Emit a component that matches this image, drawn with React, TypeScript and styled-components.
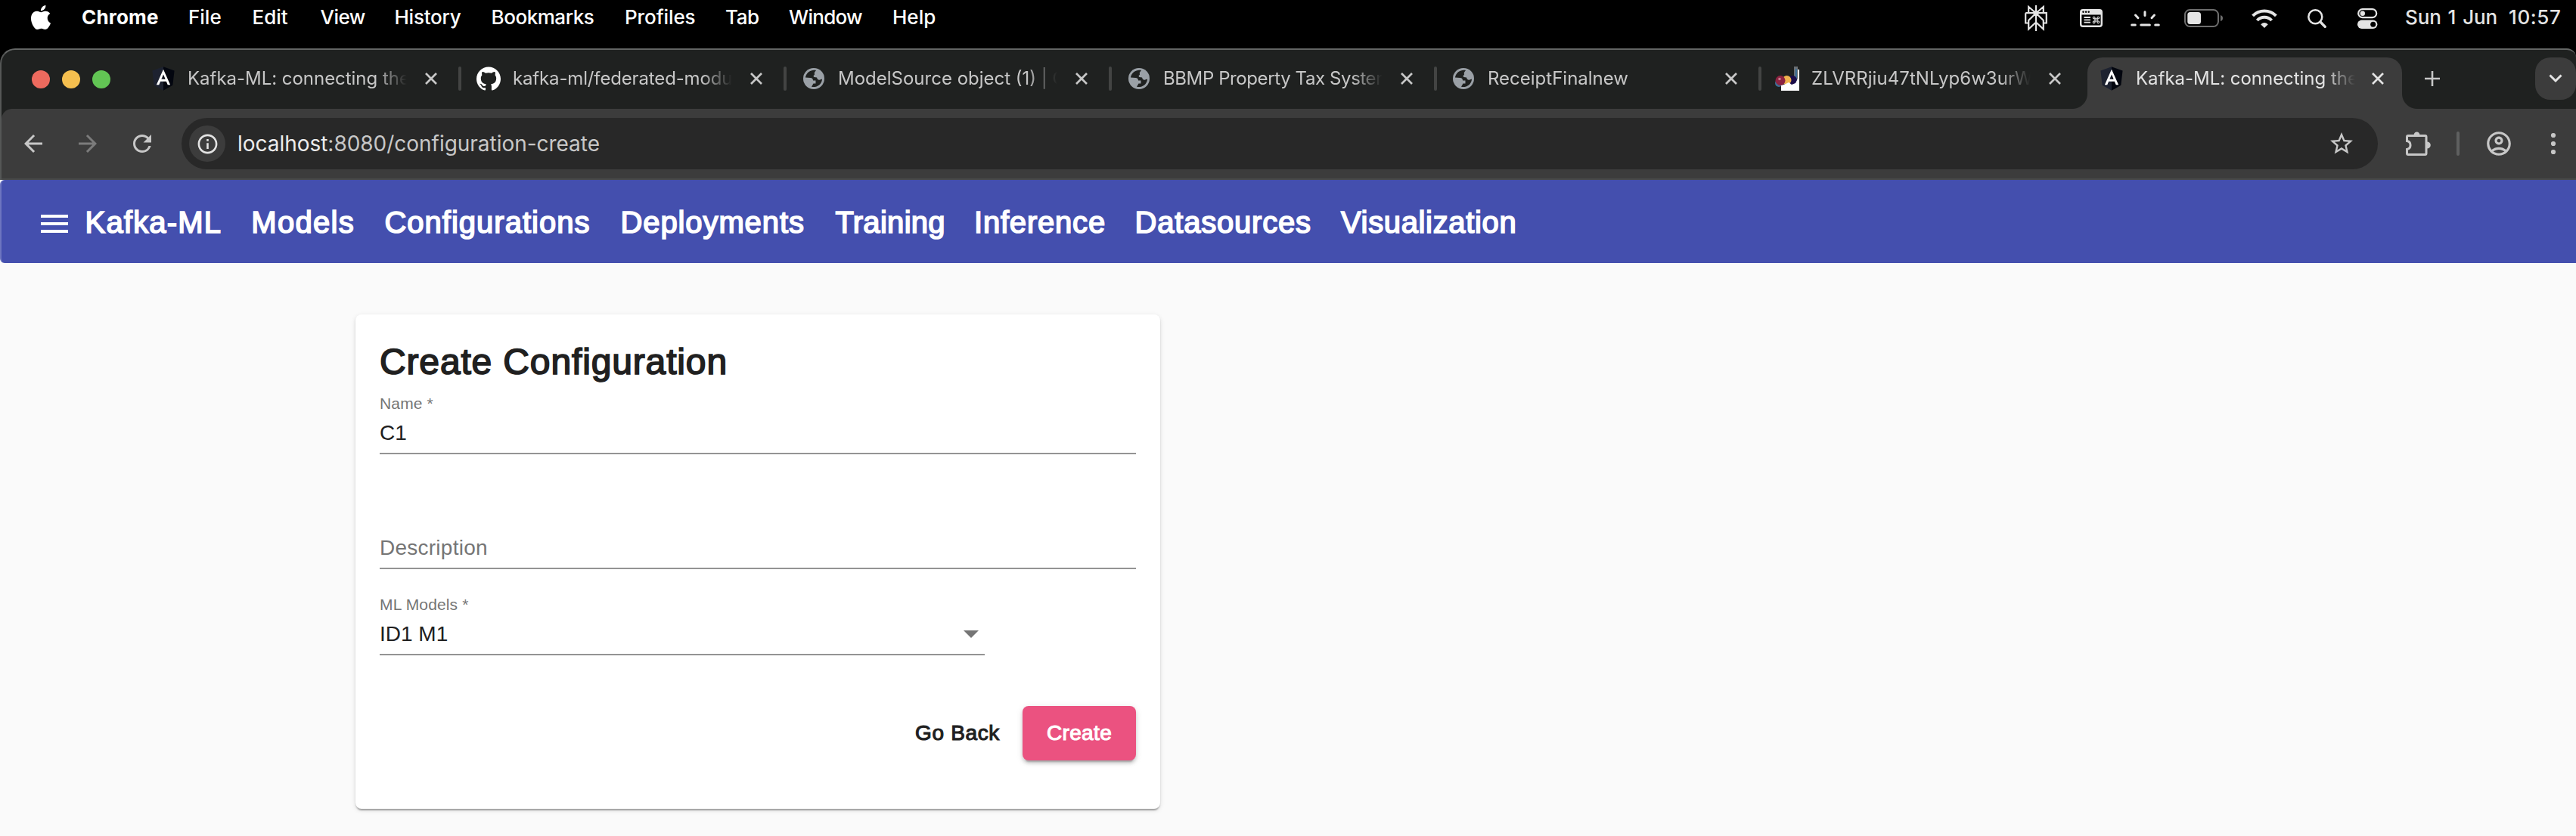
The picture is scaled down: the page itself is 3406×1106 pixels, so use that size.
import React from "react";
import styled, { createGlobalStyle, css } from "styled-components";
import { FaAngular } from "react-icons/fa";
import { SiApple, SiGithub } from "react-icons/si";
import {
  MdArrowBack,
  MdArrowForward,
  MdInfoOutline,
  MdOutlineAccountCircle,
  MdRefresh,
  MdStarBorder,
} from "react-icons/md";

const system = `Inter, "Noto Sans", sans-serif`;
const helvetica = `"Liberation Sans", Arial, sans-serif`;

const GlobalStyle = createGlobalStyle`
  * { box-sizing: border-box; }
  html, body { margin: 0; padding: 0; background: #000; }
  body { width: 3406px; height: 1106px; overflow: hidden; }
  svg { display: block; flex: none; }
  button { border: 0; padding: 0; margin: 0; background: none; font: inherit; color: inherit; }
`;

const Desktop = styled.div`
  display: flex;
  flex-direction: column;
  width: 3406px;
  height: 1106px;
  background: #000;
  font-family: ${system};
`;

/* ---------- macOS menu bar ---------- */

const MenuBar = styled.header`
  display: flex;
  align-items: center;
  height: 64px;
  padding: 0 0 19px 38px;
  color: #fff;
  font-size: 26px;
  font-weight: 500;
  line-height: 32px;
`;

const AppleSlot = styled.div`
  width: 70px;
`;

const MenuItem = styled.span<{ $width: number; $tracking?: number; $strong?: boolean }>`
  flex: none;
  width: ${(p) => p.$width}px;
  letter-spacing: ${(p) => p.$tracking ?? 0}px;
  font-weight: ${(p) => (p.$strong ? 700 : 500)};
  white-space: nowrap;
`;

const Tray = styled.div`
  display: flex;
  align-items: center;
  width: 729px;
  margin-left: auto;
  color: #e4e4e4;
`;

const TrayIcon = styled.div<{ $before?: number }>`
  flex: none;
  margin-left: ${(p) => p.$before ?? 0}px;
  padding-top: 3px;
`;

const Clock = styled.div`
  display: flex;
  margin-left: 36px;
  word-spacing: 2px;
`;

/* ---------- Browser window ---------- */

const BrowserChrome = styled.section`
  height: 174px;
  border-top: 2px solid #636564;
  border-left: 2px solid #555756;
  border-radius: 20px 12px 0 0;
  background: #1f2120;
  overflow: hidden;
`;

const TabStrip = styled.div`
  display: flex;
  height: 78px;
`;

const WindowControls = styled.div`
  display: flex;
  gap: 16px;
  width: 182px;
  padding: 27px 0 0 40px;
`;

const Light = styled.span<{ $color: string }>`
  width: 24px;
  height: 24px;
  border-radius: 50%;
  background: ${(p) => p.$color};
`;

const foot = css`
  content: "";
  position: absolute;
  bottom: 0;
  width: 20px;
  height: 20px;
`;

const TabClose = styled.button`
  margin-left: 24px;
`;

const TabShell = styled.div<{ $width: number; $active?: boolean }>`
  position: relative;
  display: flex;
  align-items: center;
  flex: none;
  width: ${(p) => p.$width}px;
  height: 76px;
  padding-left: 16px;
  color: #c7c7c7;
  ${(p) =>
    p.$active &&
    css`
      height: 68px;
      margin-top: 10px;
      padding-bottom: 12px;
      border-radius: 20px 20px 0 0;
      background: #3c3c3c;
      color: #e3e3e3;
      ${TabClose} {
        margin-left: 22px;
      }
      &::before {
        ${foot}
        left: -20px;
        background: radial-gradient(circle at 0 0, transparent 19.5px, #3c3c3c 20.5px);
      }
      &::after {
        ${foot}
        right: -20px;
        background: radial-gradient(circle at 100% 0, transparent 19.5px, #3c3c3c 20.5px);
      }
    `}
`;

const Favicon = styled.div`
  display: flex;
  align-items: center;
  justify-content: center;
  flex: none;
  width: 32px;
  height: 32px;
`;

const AngularMark = styled(FaAngular)`
  width: 32px;
  height: 36px;
  background: linear-gradient(#fff, #fff) center 46% / 62% 62% no-repeat;
  path {
    fill: url(#shieldShade);
  }
`;

const TabTitle = styled.span<{ $tracking?: number }>`
  width: 290px;
  margin-left: 16px;
  overflow: hidden;
  font-size: 24px;
  line-height: 32px;
  letter-spacing: ${(p) => p.$tracking ?? 0}px;
  white-space: nowrap;
  mask-image: linear-gradient(to right, #000 86%, transparent 100%);
`;

const TabDivider = styled.span`
  width: 4px;
  height: 32px;
  margin-left: 28px;
  border-radius: 2px;
  background: #434443;
`;

const NewTab = styled.button`
  margin: 0 126px 0 30px;
  padding-bottom: 2px;
`;

const TabSearch = styled.button`
  display: flex;
  align-items: center;
  justify-content: center;
  width: 54px;
  height: 56px;
  margin-top: 10px;
  border-radius: 20px;
  background: #3c3c3c;
`;

const Toolbar = styled.div`
  display: flex;
  align-items: center;
  height: 94px;
  padding-left: 24px;
  border-bottom: 2px solid #484949;
  border-top-left-radius: 14px;
  background: #3c3c3c;
  color: #c7c7c7;
`;

const NavButtons = styled.div`
  display: flex;
  gap: 36px;
  margin-right: 34px;
`;

const NavButton = styled.button<{ $dim?: boolean }>`
  color: ${(p) => (p.$dim ? "#7b7b7b" : "#c7c7c7")};
`;

const Omnibox = styled.div`
  display: flex;
  align-items: center;
  width: 2904px;
  height: 68px;
  padding: 0 30px 0 10px;
  border-radius: 34px;
  background: #282828;
`;

const SiteInfo = styled.div`
  display: flex;
  align-items: center;
  justify-content: center;
  width: 48px;
  height: 48px;
  margin-right: 16px;
  border-radius: 50%;
  background: #3c3c3c;
  color: #e3e3e3;
`;

const Address = styled.div`
  flex: 1;
  font-size: 28px;
  line-height: 36px;
  letter-spacing: -0.03px;
  color: #c7c7c7;
`;

const Host = styled.span`
  color: #ececec;
`;

const ToolbarItem = styled.div<{ $before: number }>`
  margin-left: ${(p) => p.$before}px;
`;

const ToolbarDivider = styled.span`
  width: 4px;
  height: 32px;
  margin-left: 33px;
  border-radius: 2px;
  background: #5f6060;
`;

/* ---------- Kafka-ML page ---------- */

const Page = styled.main`
  display: flex;
  flex-direction: column;
  flex: 1;
  background: #fafafa;
  font-family: ${helvetica};
  color: #202020;
`;

const AppBar = styled.nav`
  display: flex;
  align-items: center;
  height: 110px;
  padding: 2px 0 0 52px;
  border-left: 2px solid #6d75c0;
  border-radius: 6px 0 0 6px;
  background: #444fae;
  color: #fff;
`;

const Hamburger = styled.button`
  display: flex;
  flex-direction: column;
  gap: 6px;
  width: 36px;
  margin: 4px 22.5px 0 0;
`;

const HamburgerBar = styled.span`
  height: 4px;
  background: #fff;
`;

const AppLink = styled.a<{ $width: number; $tracking: number }>`
  flex: none;
  width: ${(p) => p.$width}px;
  font-size: 40px;
  line-height: 46px;
  letter-spacing: ${(p) => p.$tracking}px;
  white-space: nowrap;
  -webkit-text-stroke: 1.7px currentColor;
`;

const Card = styled.section`
  display: flex;
  flex-direction: column;
  width: 1064px;
  height: 654px;
  margin: 68px 0 0 470px;
  padding: 32px;
  border-radius: 8px;
  background: #fff;
  box-shadow: 0 4px 2px -2px rgba(0, 0, 0, 0.2), 0 2px 2px rgba(0, 0, 0, 0.14),
    0 2px 6px rgba(0, 0, 0, 0.12);
`;

const CardTitle = styled.h1`
  margin: 0;
  font-size: 48px;
  font-weight: 400;
  line-height: 61px;
  letter-spacing: 0.85px;
  -webkit-text-stroke: 1.7px currentColor;
`;

const Field = styled.div<{ $before: number; $width?: number }>`
  display: flex;
  flex-direction: column;
  width: ${(p) => p.$width ?? 1000}px;
  margin-top: ${(p) => p.$before}px;
  padding-bottom: 10px;
  border-bottom: 2px solid #949494;
`;

const FieldLabel = styled.label`
  margin-bottom: 11px;
  font-size: 21px;
  line-height: 24px;
  letter-spacing: 0.15px;
  color: #757575;
`;

const FieldValue = styled.div<{ $placeholder?: boolean }>`
  display: flex;
  align-items: center;
  justify-content: space-between;
  height: 32px;
  font-size: 28px;
  line-height: 32px;
  letter-spacing: ${(p) => (p.$placeholder ? 0.25 : 0)}px;
  color: ${(p) => (p.$placeholder ? "#757575" : "#202020")};
`;

const SelectArrow = styled.span`
  width: 0;
  height: 0;
  margin-right: 8px;
  border: 10px solid transparent;
  border-top-color: #757575;
  border-bottom: 0;
`;

const Actions = styled.div`
  display: flex;
  align-items: center;
  justify-content: flex-end;
  gap: 30px;
  margin-top: 67px;
`;

const TextButton = styled.button`
  && {
    font-size: 28px;
    line-height: 32px;
    letter-spacing: 0.65px;
    -webkit-text-stroke: 1.1px currentColor;
  }
`;

const PrimaryButton = styled(TextButton)`
  width: 150px;
  height: 72px;
  border-radius: 8px;
  background: #eb5280;
  color: #fff;
  box-shadow: 0 6px 2px -4px rgba(0, 0, 0, 0.2), 0 4px 4px rgba(0, 0, 0, 0.14),
    0 2px 10px rgba(0, 0, 0, 0.12);
  && {
    letter-spacing: 0.35px;
  }
`;

/* ---------- Drawings ---------- */

const ShieldShade = () => (
  <svg width="0" height="0">
    <defs>
      <linearGradient id="shieldShade">
        <stop offset="0.5" stopColor="#1d2230" />
        <stop offset="0.5" stopColor="#03060f" />
      </linearGradient>
    </defs>
  </svg>
);

const PerplexityIcon = () => (
  <svg width="30" height="34" viewBox="0 0 30 34" fill="none" stroke="currentColor" strokeWidth="2.2">
    <path d="M15 0V34M1.2 10.2H28.8V23.5H24.8M1.2 10.2V23.5H5.2M15 10.5L5.2 2V10.2M15 10.5L24.8 2V10.2M15 10.5L5.2 20V31.5L15 22.5L24.8 31.5V20L15 10.5" />
    <circle cx="15" cy="10.5" r="2.4" fill="currentColor" />
  </svg>
);

const ShortcutsIcon = () => (
  <svg width="30" height="24" viewBox="0 0 30 24" fill="none">
    <path fill="currentColor" fillRule="evenodd" d="M4 0H26A4 4 0 0 1 30 4V20A4 4 0 0 1 26 24H4A4 4 0 0 1 0 20V4A4 4 0 0 1 4 0ZM2.4 7.5V20A1.6 1.6 0 0 0 4 21.6H26A1.6 1.6 0 0 0 27.6 20V7.5Z" />
    <circle cx="4.5" cy="3.7" r="1.2" fill="#000" />
    <circle cx="8.1" cy="3.7" r="1.2" fill="#000" />
    <circle cx="11.7" cy="3.7" r="1.2" fill="#000" />
    <path d="M5.5 11H14M5.5 14.3H14M5.5 17.6H14" stroke="currentColor" strokeWidth="1.8" />
    <path d="M20 12.8V16M23 12.8V16M20 12.8H23M20 16H23M20 12.8H19A1.3 1.3 0 1 1 20 11.6ZM23 12.8H24A1.3 1.3 0 1 0 23 11.6ZM20 16H19A1.3 1.3 0 1 0 20 17.2ZM23 16H24A1.3 1.3 0 1 1 23 17.2Z" stroke="currentColor" strokeWidth="1.2" />
  </svg>
);

const BacklightIcon = () => (
  <svg width="39" height="21" viewBox="0 0 39 21" stroke="currentColor" strokeWidth="3" strokeLinecap="round">
    <path d="M19 1.7V6.5M6.5 6L10 9.7M31.5 6L28 9.7M1.7 19H6.3M13.8 19H25.4M32.7 19H37.3" />
  </svg>
);

const BatteryIcon = () => (
  <svg width="51" height="24" viewBox="0 0 51 24">
    <rect x="1" y="1" width="44" height="22" rx="6.5" fill="none" stroke="#6e6e6e" strokeWidth="2" />
    <rect x="4.3" y="4" width="17.7" height="16" rx="3.5" fill="currentColor" />
    <path d="M48 8Q51 9 51 12T48 16Z" fill="#6e6e6e" />
  </svg>
);

const WifiIcon = () => (
  <svg width="34" height="25" viewBox="0 0 34 25" fill="none" stroke="currentColor" strokeWidth="4">
    <path d="M1.6 8.9A21.8 21.8 0 0 1 32.4 8.9M7.4 15A13.2 13.2 0 0 1 26.6 15" />
    <path d="M17 25L12.2 20.2Q17 15.8 21.8 20.2Z" fill="currentColor" stroke="none" />
  </svg>
);

const SearchIcon = () => (
  <svg width="25" height="25" viewBox="0 0 25 25" fill="none" stroke="currentColor" strokeLinecap="round">
    <circle cx="10.3" cy="10.3" r="9" strokeWidth="2.5" />
    <path d="M17 17L23.2 23.4" strokeWidth="3.4" />
  </svg>
);

const ControlCenterIcon = () => (
  <svg width="27" height="27" viewBox="0 0 27 27">
    <rect x="1.2" y="1.2" width="24" height="11" rx="5.5" fill="none" stroke="currentColor" strokeWidth="2.2" />
    <circle cx="6.8" cy="6.7" r="3.2" fill="currentColor" />
    <rect x="0" y="15.6" width="26.4" height="11.4" rx="5.7" fill="currentColor" />
    <circle cx="20.7" cy="21.3" r="3.5" fill="#000" />
  </svg>
);

const GlobeIcon = () => (
  <svg width="28" height="28" viewBox="0 0 28 28">
    <circle cx="14" cy="14" r="14" fill="#9aa0a6" />
    <path d="M17 2.9C11 1.6 4 5.4 2.9 12.5L9.5 13C12 13.2 13 14.5 13 16.5H16.5V20.5H13.5L11 24.8C17 26.2 24.5 22.5 25.1 14.5L21.5 15.8C19.5 16 18.5 14.5 18 12.5L14.5 12C13 11 13.5 9.5 15 9L14.8 6Z" fill="#1f2120" />
  </svg>
);

const BalloonIcon = () => (
  <svg width="32" height="32" viewBox="0 0 32 32">
    <path d="M25 0H30V20H25Z" fill="#6b7075" />
    <path d="M27 3H29V20H26Z" fill="#3d6d94" />
    <circle cx="5" cy="22" r="5" fill="#3f6f96" />
    <circle cx="23" cy="18" r="6" fill="#1c0d4a" />
    <circle cx="15.5" cy="18" r="6" fill="#f0b24f" />
    <path d="M8 25L14 23L18 21L22 24L27 22L30 16V4H32V32H8Z" fill="#fff" />
    <circle cx="7" cy="18.5" r="6.5" fill="#8d2341" />
    <circle cx="6" cy="16.5" r="1.8" fill="#c57b8c" />
  </svg>
);

const CloseIcon = () => (
  <svg width="16" height="16" viewBox="0 0 16 16" stroke="currentColor" strokeWidth="2.7">
    <path d="M1 1L15 15M15 1L1 15" />
  </svg>
);

const PlusIcon = () => (
  <svg width="20" height="20" viewBox="0 0 20 20" stroke="#c7c7c7" strokeWidth="2.6">
    <path d="M10 0V20M0 10H20" />
  </svg>
);

const ChevronIcon = () => (
  <svg width="18" height="12" viewBox="0 0 18 12" fill="none" stroke="#e3e3e3" strokeWidth="3">
    <path d="M1.5 1.5L9 9L16.5 1.5" />
  </svg>
);

const ExtensionsIcon = () => (
  <svg width="34" height="32" viewBox="0 0 34 32">
    <path d="M3 5.5H25.5Q27 5.5 27 7V29Q27 30.5 25.5 30.5H3Q1.5 30.5 1.5 29V23.5A5.6 5.6 0 0 0 1.5 12.5V7Q1.5 5.5 3 5.5Z" fill="none" stroke="currentColor" strokeWidth="3" />
    <path d="M10.5 5A4 4.6 0 0 1 18.5 5ZM28 13.5A4.6 4.3 0 0 1 28 22.5Z" fill="currentColor" />
  </svg>
);

const KebabIcon = () => (
  <svg width="8" height="30" viewBox="0 0 8 30" fill="currentColor">
    <circle cx="4" cy="4" r="3.1" />
    <circle cx="4" cy="15" r="3.1" />
    <circle cx="4" cy="26" r="3.1" />
  </svg>
);

/* ---------- Content ---------- */

const menus = [
  { label: "Chrome", width: 141, tracking: 0.2, strong: true },
  { label: "File", width: 84.5 },
  { label: "Edit", width: 90 },
  { label: "View", width: 98, tracking: -0.5 },
  { label: "History", width: 128, tracking: -0.25 },
  { label: "Bookmarks", width: 176.5, tracking: -0.45 },
  { label: "Profiles", width: 133, tracking: -0.1 },
  { label: "Tab", width: 84, tracking: -0.4 },
  { label: "Window", width: 137, tracking: -0.7 },
  { label: "Help", width: 80 },
];

const tabs = [
  { title: "Kafka-ML: connecting the", width: 430, icon: <AngularMark />, tracking: -0.03 },
  { title: "kafka-ml/federated-modu", width: 430, icon: <SiGithub size={32} color="#fff" />, tracking: -0.15 },
  { title: "ModelSource object (1) | C", width: 430, icon: <GlobeIcon />, tracking: 0 },
  { title: "BBMP Property Tax System", width: 429, icon: <GlobeIcon />, tracking: -0.4 },
  { title: "ReceiptFinalnew", width: 428, icon: <GlobeIcon />, tracking: 0 },
  { title: "ZLVRRjiu47tNLyp6w3urW", width: 429, icon: <BalloonIcon />, tracking: 0.05 },
  { title: "Kafka-ML: connecting the", width: 416, icon: <AngularMark />, tracking: -0.03, active: true },
];

const links = [
  { label: "Kafka-ML", width: 219.8, tracking: 1.2 },
  { label: "Models", width: 176.2, tracking: 1.3 },
  { label: "Configurations", width: 312, tracking: 1 },
  { label: "Deployments", width: 284, tracking: 0.9 },
  { label: "Training", width: 183.5, tracking: 0.3 },
  { label: "Inference", width: 212.5, tracking: 0.8 },
  { label: "Datasources", width: 272.5, tracking: 0.8 },
  { label: "Visualization", width: 240, tracking: 0.65 },
];

export default function App() {
  return (
    <Desktop>
      <GlobalStyle />
      <ShieldShade />
      <MenuBar>
        <AppleSlot>
          <SiApple size={32} />
        </AppleSlot>
        {menus.map((m) => (
          <MenuItem key={m.label} $width={m.width} $tracking={m.tracking} $strong={m.strong}>
            {m.label}
          </MenuItem>
        ))}
        <Tray>
          <TrayIcon><PerplexityIcon /></TrayIcon>
          <TrayIcon $before={43}><ShortcutsIcon /></TrayIcon>
          <TrayIcon $before={37}><BacklightIcon /></TrayIcon>
          <TrayIcon $before={32}><BatteryIcon /></TrayIcon>
          <TrayIcon $before={38}><WifiIcon /></TrayIcon>
          <TrayIcon $before={40}><SearchIcon /></TrayIcon>
          <TrayIcon $before={41}><ControlCenterIcon /></TrayIcon>
          <Clock>
            <MenuItem $width={137} $tracking={-0.1}>Sun 1 Jun</MenuItem>
            <MenuItem $width={80} $tracking={0.6}>10:57</MenuItem>
          </Clock>
        </Tray>
      </MenuBar>

      <BrowserChrome>
        <TabStrip>
          <WindowControls>
            <Light $color="#ed6a5e" />
            <Light $color="#f5bf4f" />
            <Light $color="#62c554" />
          </WindowControls>
          {tabs.map((tab, i) => (
            <TabShell key={i} $width={tab.width} $active={tab.active}>
              <Favicon>{tab.icon}</Favicon>
              <TabTitle $tracking={tab.tracking}>{tab.title}</TabTitle>
              <TabClose><CloseIcon /></TabClose>
              {i < tabs.length - 2 && <TabDivider />}
            </TabShell>
          ))}
          <NewTab><PlusIcon /></NewTab>
          <TabSearch><ChevronIcon /></TabSearch>
        </TabStrip>
        <Toolbar>
          <NavButtons>
            <NavButton><MdArrowBack size={36} /></NavButton>
            <NavButton $dim><MdArrowForward size={36} /></NavButton>
            <NavButton><MdRefresh size={36} /></NavButton>
          </NavButtons>
          <Omnibox>
            <SiteInfo><MdInfoOutline size={31} /></SiteInfo>
            <Address>
              <Host>localhost</Host>:8080/configuration-create
            </Address>
            <MdStarBorder size={36} />
          </Omnibox>
          <ToolbarItem $before={37}><ExtensionsIcon /></ToolbarItem>
          <ToolbarDivider />
          <ToolbarItem $before={33}><MdOutlineAccountCircle size={38} /></ToolbarItem>
          <ToolbarItem $before={49}><KebabIcon /></ToolbarItem>
        </Toolbar>
      </BrowserChrome>

      <Page>
        <AppBar>
          <Hamburger>
            <HamburgerBar />
            <HamburgerBar />
            <HamburgerBar />
          </Hamburger>
          {links.map((l) => (
            <AppLink key={l.label} $width={l.width} $tracking={l.tracking}>
              {l.label}
            </AppLink>
          ))}
        </AppBar>
        <Card>
          <CardTitle>Create Configuration</CardTitle>
          <Field $before={13}>
            <FieldLabel>Name *</FieldLabel>
            <FieldValue>C1</FieldValue>
          </Field>
          <Field $before={108}>
            <FieldValue $placeholder>Description</FieldValue>
          </Field>
          <Field $before={35} $width={800}>
            <FieldLabel>ML Models *</FieldLabel>
            <FieldValue>
              ID1 M1
              <SelectArrow />
            </FieldValue>
          </Field>
          <Actions>
            <TextButton>Go Back</TextButton>
            <PrimaryButton>Create</PrimaryButton>
          </Actions>
        </Card>
      </Page>
    </Desktop>
  );
}
